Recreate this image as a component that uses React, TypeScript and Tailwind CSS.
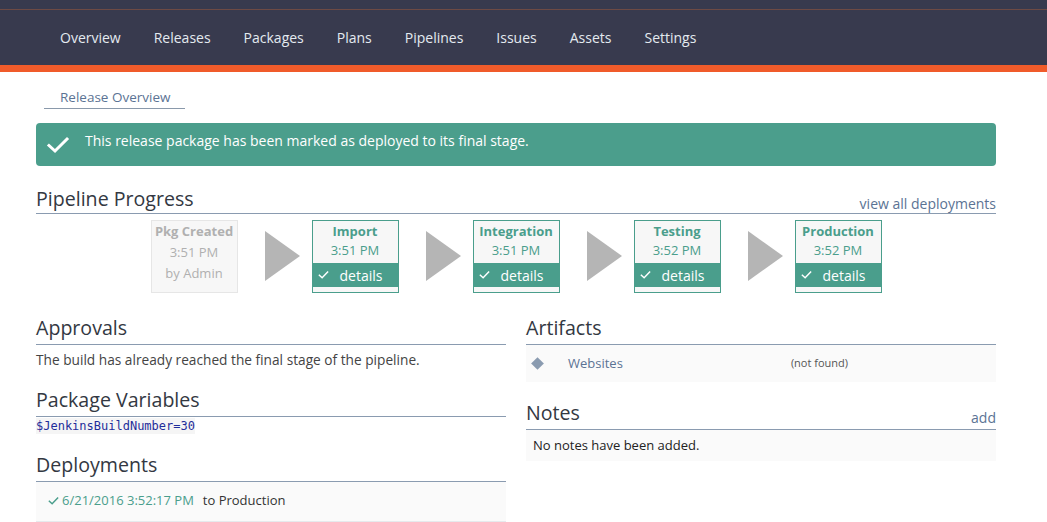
import React from "react";

const navItems = ["Overview", "Releases", "Packages", "Plans", "Pipelines", "Issues", "Assets", "Settings"];

function Check({ className }: { className?: string }) {
  return (
    <svg viewBox="0 0 12 10" className={className} fill="none" stroke="currentColor" strokeWidth="1.6" strokeLinecap="square">
      <path d="M1.5 5.2 L4.5 8 L10.5 1.8" />
    </svg>
  );
}

function Arrow() {
  return (
    <div className="w-[74px] h-[72px] flex items-center pl-[27px]">
      <svg width="35" height="50" viewBox="0 0 35 50">
        <polygon points="0,0 35,25 0,50" fill="#b5b5b5" />
      </svg>
    </div>
  );
}

function Stage({ name, time }: { name: string; time: string }) {
  return (
    <div className="w-[87px] h-[73px] border border-[#4a9e8c] bg-[#f7f7f7] flex flex-col">
      <div className="text-[13px] font-bold text-[#4a9e8c] text-center leading-[18px] pt-[1px]">{name}</div>
      <div className="text-[13px] text-[#4a9e8c] text-center leading-[20px]">{time}</div>
      <div className="mt-[3px] h-[24px] bg-[#4a9e8c] text-white text-[14px] flex items-center pl-[5px]">
        <Check className="w-[11px] h-[10px] mr-[11px]" />
        <span>details</span>
      </div>
    </div>
  );
}

function Heading({ title, right, className }: { title: string; right?: string; className?: string }) {
  return (
    <div className={"h-[32px] flex justify-between items-end border-b border-[#8a9bb0] " + (className ?? "")}>
      <div className="text-[19.6px] leading-[24px] pb-[4px] text-[#333842]">{title}</div>
      {right && <div className="text-[14px] leading-[18px] pb-[2px] text-[#5b7394]">{right}</div>}
    </div>
  );
}

export default function App() {
  return (
    <div className="w-[1047px] h-[522px] overflow-hidden bg-white" style={{ fontFamily: "'Open Sans', sans-serif" }}>
      <div className="h-[65px] bg-[#383a4e] flex flex-col">
        <div className="h-[9px]" />
        <div className="h-px bg-[#6e4a44]" />
        <div className="flex-1 flex items-center gap-[33px] pl-[60px] text-[14px] text-[#e4eaf0] font-medium">
          {navItems.map((n) => (
            <span key={n}>{n}</span>
          ))}
        </div>
      </div>
      <div className="h-[7px] bg-[#f05b2a]" />

      <div className="pl-[36px] pr-[51px]">
        <div className="mt-[16px] ml-[8px] w-[141px] h-[21px] border-b border-[#8a99ab] pl-[16px] text-[13.5px] leading-[18px] text-[#5b7394]">
          Release Overview
        </div>

        <div className="mt-[14px] h-[43px] rounded-[4px] bg-[#4b9e8c] flex items-center pl-[10px] text-white text-[14px]">
          <svg width="24" height="20" viewBox="0 0 24 20" fill="none" stroke="white" strokeWidth="3" strokeLinecap="square">
            <path d="M3 10.5 L9 16 L21 4" />
          </svg>
          <span className="ml-[15px] pb-[8px]">This release package has been marked as deployed to its final stage.</span>
        </div>

        <div className="mt-[17px] h-[31px] flex justify-between items-end border-b border-[#8a9bb0]">
          <div className="text-[19.6px] leading-[24px] pb-[2px] text-[#333842]">Pipeline Progress</div>
          <div className="text-[14px] leading-[18px] text-[#5b7394]">view all deployments</div>
        </div>

        <div className="mt-[6px] flex justify-center">
          <div className="w-[87px] h-[73px] border border-[#e6e6e6] bg-[#f7f7f7] flex flex-col items-center text-[#b0b0b0] text-[13px]">
            <div className="font-bold leading-[18px] pt-[1px]">Pkg Created</div>
            <div className="leading-[22px] mt-[1px]">3:51 PM</div>
            <div className="leading-[20px]">by Admin</div>
          </div>
          <Arrow />
          <Stage name="Import" time="3:51 PM" />
          <Arrow />
          <Stage name="Integration" time="3:51 PM" />
          <Arrow />
          <Stage name="Testing" time="3:52 PM" />
          <Arrow />
          <Stage name="Production" time="3:52 PM" />
        </div>

        <div className="mt-[20px] grid grid-cols-2 gap-[20px]">
          <div className="flex flex-col">
            <Heading title="Approvals" className="h-[30px]" />
            <div className="h-[30px] leading-[30px] text-[13.7px] text-[#444]">
              The build has already reached the final stage of the pipeline.
            </div>
            <Heading title="Package Variables" className="mt-[10px]" />
            <div className="h-[18px] flex items-center">
              <span className="bg-[#f5f5f5] text-[12px] leading-[16px] text-[#1f2d9a]" style={{ fontFamily: "'DejaVu Sans Mono', monospace" }}>
                $JenkinsBuildNumber=30
              </span>
            </div>
            <Heading title="Deployments" className="mt-[15px]" />
            <div className="h-[40px] bg-[#fafafa] border-b border-[#e6eaed] flex items-center pl-[12px] pb-[1px] text-[13px]">
              <Check className="w-[11px] h-[10px] text-[#4a9e8c] mr-[3px]" />
              <span className="text-[#4a9e8c]">6/21/2016 3:52:17 PM</span>
              <span className="ml-[9px] text-[#333]">to Production</span>
            </div>
          </div>

          <div className="flex flex-col">
            <Heading title="Artifacts" className="h-[30px]" />
            <div className="h-[37px] bg-[#fafafa] flex items-center text-[13px]">
              <div className="ml-[7px] w-[9px] h-[9px] bg-[#8a9bb0] rotate-45" />
              <span className="ml-[26px] text-[#5b7394]">Websites</span>
              <span className="ml-[168px] text-[11px] text-[#555]">(not found)</span>
            </div>
            <Heading title="Notes" right="add" className="mt-[16px]" />
            <div className="h-[31px] bg-[#fafafa] flex items-center pl-[7px] text-[13px] text-[#222]">
              No notes have been added.
            </div>
          </div>
        </div>
      </div>
    </div>
  );
}
